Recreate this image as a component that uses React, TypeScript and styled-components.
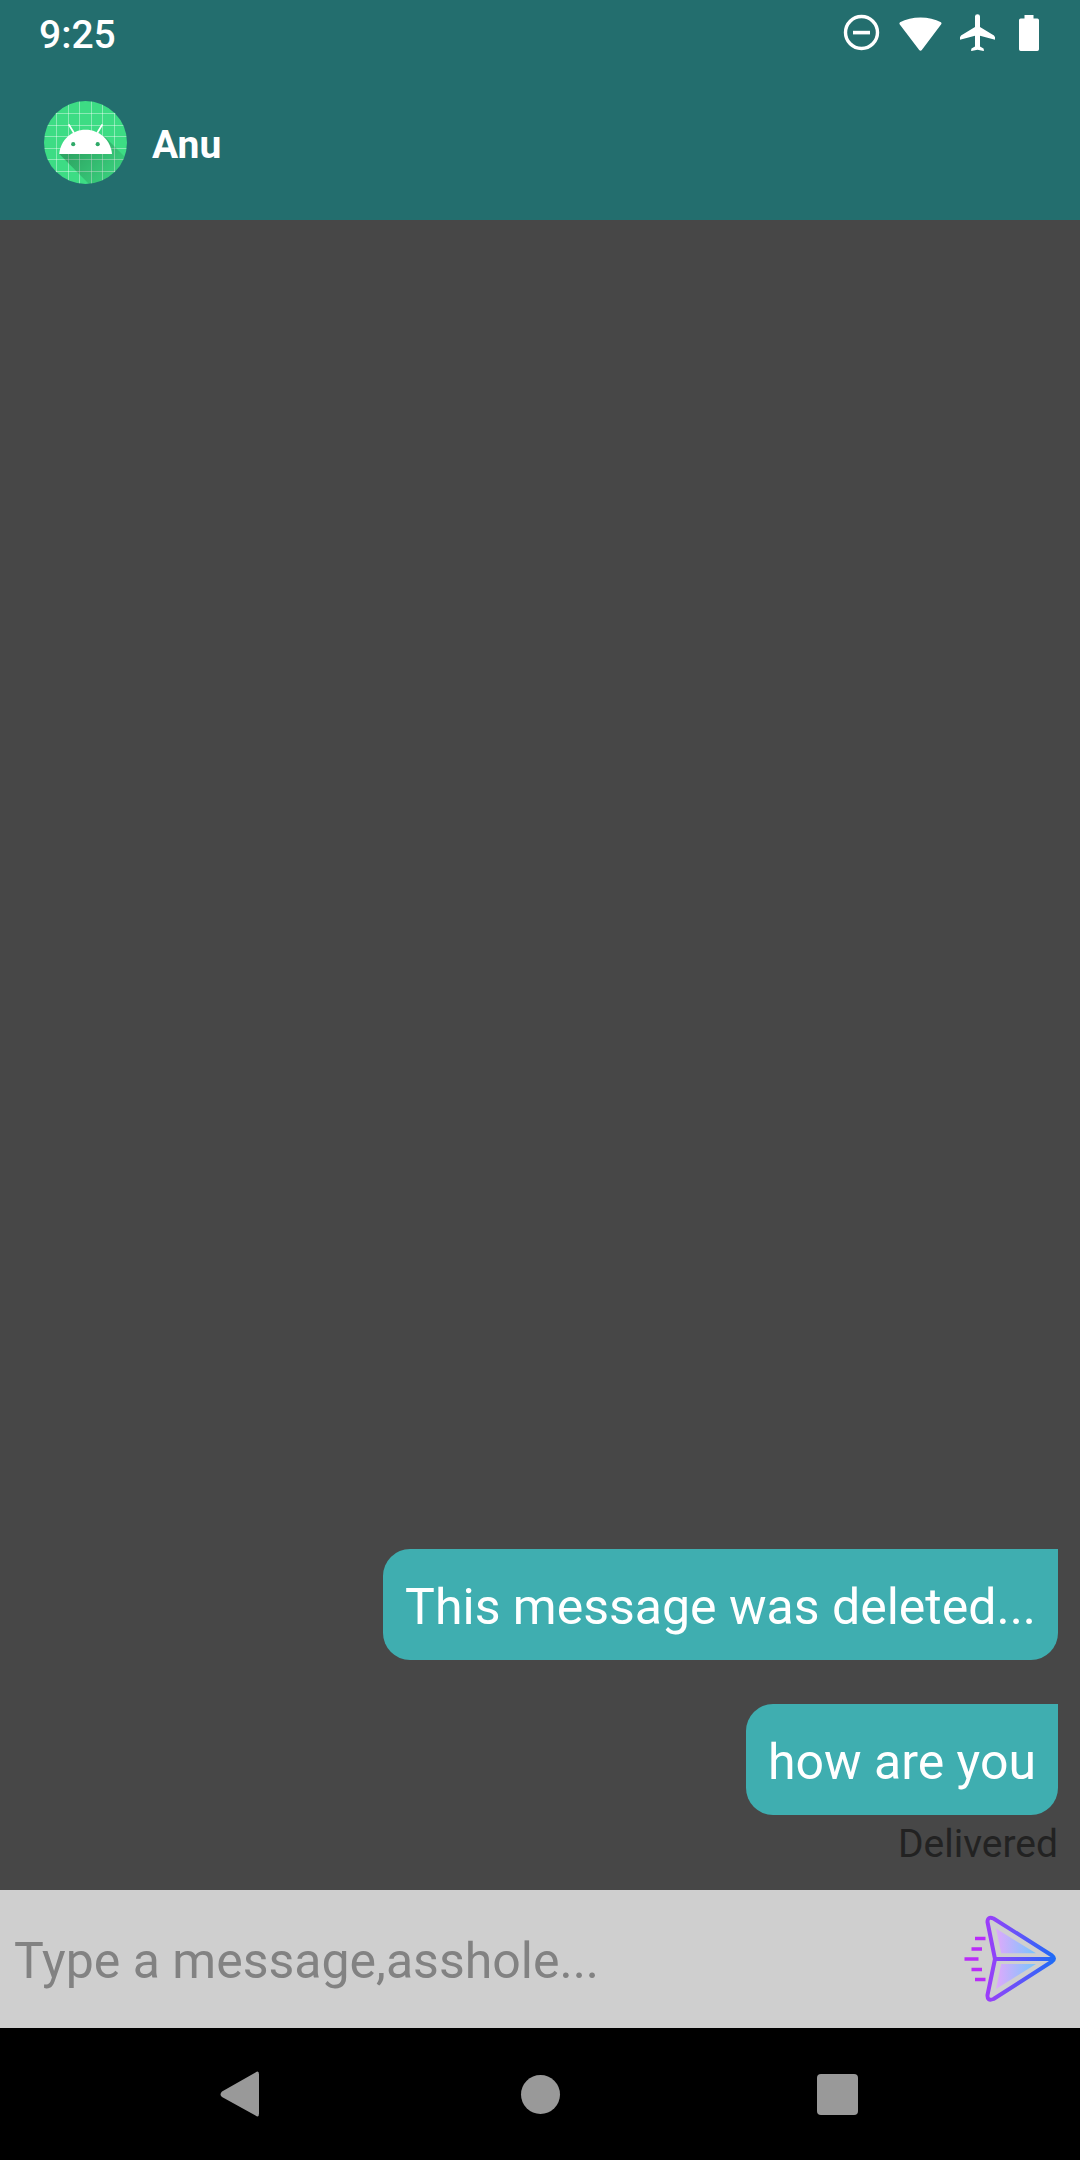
import React, { useState } from "react";
import styled, { createGlobalStyle } from "styled-components";

const GlobalStyle = createGlobalStyle`
  *, *::before, *::after { box-sizing: border-box; }
  body { margin: 0; background: #474747; font-family: Roboto, "Noto Sans", sans-serif; }
`;

const Screen = styled.div`
  min-height: 100vh;
  display: flex;
  flex-direction: column;
  background: #474747;
`;

const TopArea = styled.div`
  background: #236e6e;
  color: #fff;
`;

const StatusBar = styled.div`
  height: 66px;
  padding: 0 27px 0 39px;
  display: flex;
  align-items: center;
  justify-content: space-between;
`;

const Clock = styled.time`
  padding-top: 4px;
  font-size: 39px;
  line-height: 46px;
  font-weight: 500;
`;

const StatusIcons = styled.div`
  display: flex;
  align-items: center;
`;

const StatusIcon = styled.svg<{ $w: number }>`
  display: block;
  width: ${(p) => p.$w}px;
  height: 40px;
  fill: #fff;
`;

const AppBar = styled.header`
  height: 154px;
  padding: 0 44px 2px;
  display: flex;
  align-items: center;
  gap: 25px;
`;

const Avatar = styled.svg`
  display: block;
  width: 83px;
  height: 83px;
  flex: none;
`;

const Name = styled.h1`
  margin: 0;
  padding-top: 6px;
  font-size: 39px;
  line-height: 46px;
  font-weight: 700;
`;

const Messages = styled.main`
  flex: 1;
  display: flex;
  flex-direction: column;
  justify-content: flex-end;
  align-items: flex-end;
  padding: 22px;
`;

const Bubble = styled.p`
  margin: 0 0 44px;
  padding: 25px 22px 19px;
  border-radius: 27px 0 27px 27px;
  background: #3faeb0;
  color: #fff;
  font-size: 50px;
  line-height: 67px;

  &:last-of-type { margin-bottom: 0; }
`;

const Receipt = styled.small`
  padding-top: 6px;
  font-size: 39px;
  line-height: 47px;
  color: #222;
`;

const Composer = styled.form`
  height: 138px;
  padding: 0 14px;
  display: flex;
  align-items: center;
  background: #cfcfcf;
`;

const MessageInput = styled.input`
  flex: 1;
  min-width: 0;
  height: 100%;
  padding: 4px 0 0;
  border: 0;
  outline: 0;
  background: transparent;
  color: #222;
  font: 400 50px/60px Roboto, "Noto Sans", sans-serif;

  &::placeholder { color: #828282; opacity: 1; }
`;

const SendButton = styled.button`
  flex: none;
  padding: 0;
  border: 0;
  background: none;
  cursor: pointer;

  svg { display: block; width: 110px; height: 110px; }
`;

const NavBar = styled.nav`
  height: 132px;
  padding: 0 92px;
  display: grid;
  grid-template-columns: repeat(3, 1fr);
  background: #000;
`;

const NavButton = styled.button`
  display: flex;
  align-items: center;
  justify-content: center;
  padding: 0;
  border: 0;
  background: none;
  color: #999;
  cursor: pointer;

  svg { display: block; width: 48px; height: 48px; fill: currentColor; }
`;

const gridLines = [12.5, 24.5, 35.5, 47.5, 58.5, 70.5];

function AndroidAvatar() {
  return (
    <Avatar viewBox="0 0 83 83" role="img" aria-label="Profile picture">
      <defs>
        <clipPath id="disc"><circle cx="41.5" cy="41.5" r="41.5" /></clipPath>
        <linearGradient id="shade" gradientUnits="userSpaceOnUse" x1="34" y1="44" x2="66" y2="76">
          <stop offset="0" stopColor="#000" stopOpacity=".25" />
          <stop offset="1" stopColor="#000" stopOpacity=".07" />
        </linearGradient>
      </defs>
      <g clipPath="url(#disc)">
        <rect width="83" height="83" fill="#3ddc84" />
        {gridLines.map((n) => (
          <path key={n} d={`M${n} 0V83M0 ${n}H83`} stroke="#fff" strokeOpacity=".4" strokeWidth="1" />
        ))}
        <path d="M15.3 53L46 84H84V59L60 35Z" fill="url(#shade)" />
      </g>
      <path d="M24.7 23.4L30 32M58.4 23.4L53.2 32" stroke="#fff" strokeWidth="1.8" />
      <path d="M15.2 53C16.4 39.5 27.5 28.8 41.6 28.8S66.9 39.5 68 53Z" fill="#fff" />
      <circle cx="29.2" cy="43.2" r="2.1" fill="#2fa968" />
      <circle cx="53.7" cy="43.2" r="2.1" fill="#2fa968" />
    </Avatar>
  );
}

function SendIcon() {
  return (
    <svg viewBox="0 0 110 110" aria-hidden="true">
      <defs>
        <linearGradient id="edge" gradientUnits="userSpaceOnUse" x1="8" y1="0" x2="98" y2="0">
          <stop offset="0" stopColor="#c822ff" />
          <stop offset=".35" stopColor="#8c46f8" />
          <stop offset=".7" stopColor="#5258fa" />
          <stop offset="1" stopColor="#1f6cf6" />
        </linearGradient>
        <linearGradient id="wing" gradientUnits="userSpaceOnUse" x1="40" y1="0" x2="78" y2="0">
          <stop offset="0" stopColor="#dfa9fb" />
          <stop offset="1" stopColor="#7dc4fd" />
        </linearGradient>
      </defs>
      <path d="M40 24.5L80 49.3H45.2ZM40 85L80 60H45.2Z" fill="url(#wing)" />
      <path
        d="M37.5 14.5L96 51.5Q100 54.5 96 57.5L37.5 95Q31 97.500 31.5 91L39 55L31.5 18Q31.5 12 37.5 14.5ZM39 55H97"
        fill="none"
        stroke="url(#edge)"
        strokeWidth="4"
        strokeLinejoin="round"
      />
      <path d="M19 34.5H29.5M15.500 45H26M8.500 55H22.500M15.500 65.500H26M19 75.500H29.5" stroke="#b92cf8" strokeWidth="3.5" />
    </svg>
  );
}

export default function App() {
  const [draft, setDraft] = useState("");

  return (
    <>
      <GlobalStyle />
      <Screen>
        <TopArea>
          <StatusBar>
            <Clock>9:25</Clock>
            <StatusIcons>
              <StatusIcon $w={60} viewBox="0 0 60 40">
                <circle cx="30.5" cy="19.500" r="16" fill="none" stroke="#fff" strokeWidth="3.400" />
                <path d="M22 17.800h17v3.600H22z" />
              </StatusIcon>
              <StatusIcon $w={60} viewBox="0 0 60 40">
                <path d="M9 9.200C20.500 2.900 38.500 2.900 50 9.200Q51 10.200 50.200 11.300L31 36.800Q29.500 38.800 28 36.800L8.600 11.300Q8 10.200 9 9.200Z" />
              </StatusIcon>
              <StatusIcon $w={54} viewBox="0 0 54 40">
                <path d="M24 3.500Q24 1.200 26.500 1.200T29 3.500V14L43 22.400Q44.500 23.500 44 26.800L29 22.800V33.500L32.500 35.500Q33.500 38 32.500 38L26.500 36.800L20.500 38Q19.500 38 20.500 35.500L24 33.500V22.800L9 26.800Q8.500 23.500 10 22.400L24 14Z" />
              </StatusIcon>
              <StatusIcon $w={48} viewBox="0 0 48 40">
                <path d="M19.500 2h9v3.500H32.300q1.700 0 1.700 1.700V36.300q0 1.700-1.700 1.700H15.700q-1.700 0-1.700-1.700V7.200q0-1.700 1.700-1.700h3.800z" />
              </StatusIcon>
            </StatusIcons>
          </StatusBar>
          <AppBar>
            <AndroidAvatar />
            <Name>Anu</Name>
          </AppBar>
        </TopArea>

        <Messages>
          <Bubble>This message was deleted...</Bubble>
          <Bubble>how are you</Bubble>
          <Receipt>Delivered</Receipt>
        </Messages>

        <Composer onSubmit={(e) => e.preventDefault()}>
          <MessageInput
            aria-label="Message"
            placeholder="Type a message,asshole..."
            value={draft}
            onChange={(e) => setDraft(e.target.value)}
          />
          <SendButton type="submit" aria-label="Send">
            <SendIcon />
          </SendButton>
        </Composer>

        <NavBar>
          <NavButton type="button" aria-label="Back">
            <svg viewBox="0 0 48 48"><path d="M38.500 2.500Q42 0 42 4.500V43.500Q42 48 38.500 45.500L5 27Q2 24.500 5 21.500Z" /></svg>
          </NavButton>
          <NavButton type="button" aria-label="Home">
            <svg viewBox="0 0 48 48"><circle cx="24.500" cy="24.500" r="19.500" /></svg>
          </NavButton>
          <NavButton type="button" aria-label="Recent apps">
            <svg viewBox="0 0 48 48"><rect x="2" y="4" width="41" height="41" rx="4" /></svg>
          </NavButton>
        </NavBar>
      </Screen>
    </>
  );
}
